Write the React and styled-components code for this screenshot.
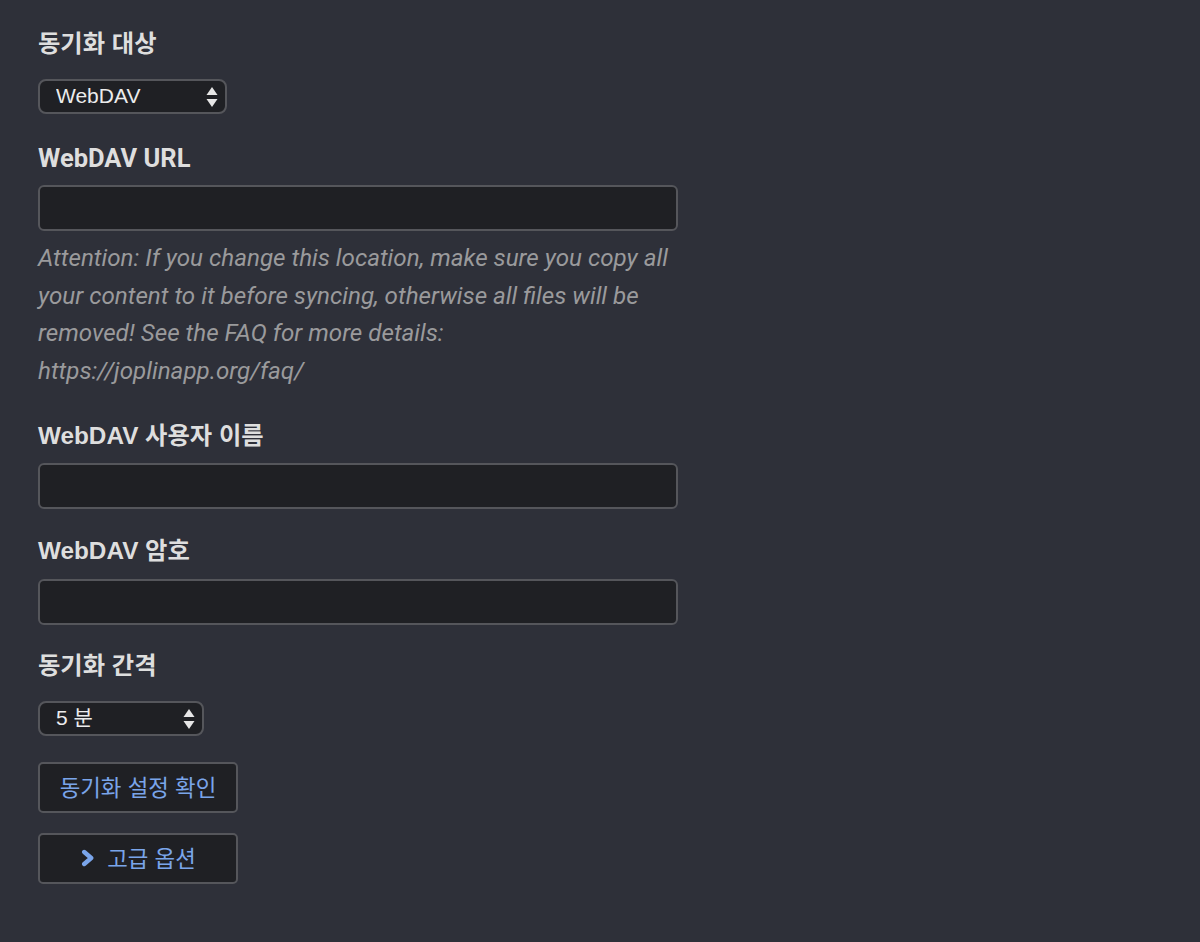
import React from "react";
import styled, { createGlobalStyle } from "styled-components";

const Global = createGlobalStyle`
  html, body { margin: 0; padding: 0; background: #2e3039; }
  body { font-family: Roboto, "Noto Sans CJK KR", sans-serif; }
  * { box-sizing: border-box; }
`;

const Page = styled.div`
  min-height: 942px;
  background: #2e3039;
  padding: 29px 38px 40px;
  display: flex;
  flex-direction: column;
  align-items: flex-start;
`;

const Label = styled.div`
  font-family: ${(p) => (p.$latin ? 'Roboto' : '"Liberation Sans"')}, "Noto Sans CJK KR", sans-serif;
  font-weight: 700;
  font-size: ${(p) => (p.$latin ? 25.5 : 24.3)}px;
  line-height: 30px;
  color: #dedede;
  margin-top: ${(p) => p.$mt || 0}px;
`;

const SelectWrap = styled.div`
  position: relative;
  width: ${(p) => p.$w}px;
  height: 35px;
  margin-top: ${(p) => p.$mt || 0}px;
`;

const Select = styled.select`
  appearance: none;
  -webkit-appearance: none;
  width: 100%;
  height: 100%;
  background: #1f2024;
  border: 2px solid #55565b;
  border-radius: 8px;
  color: #ececec;
  font-family: "Liberation Sans", "Noto Sans CJK KR", sans-serif;
  font-size: 21px;
  padding: 0 0 3px 16px;
  outline: none;
`;

const Arrows = styled.svg`
  position: absolute;
  right: 9px;
  top: 50%;
  transform: translateY(-50%);
  pointer-events: none;
`;

const Input = styled.input`
  width: 640px;
  height: 46px;
  background: #1f2024;
  border: 2px solid #55565b;
  border-radius: 6px;
  color: #ececec;
  font-size: 20px;
  padding: 0 12px;
  outline: none;
  margin-top: ${(p) => p.$mt || 0}px;
`;

const Description = styled.div`
  width: 640px;
  margin-top: 9px;
  font-family: Roboto, sans-serif;
  font-style: italic;
  font-size: 24.2px;
  line-height: 37.6px;
  color: #9a9a9c;
`;

const Button = styled.button`
  width: 200px;
  height: 51px;
  margin-top: ${(p) => p.$mt || 0}px;
  background: #1f2024;
  border: 2px solid #55565b;
  border-radius: 5px;
  color: #7aa5ea;
  font-family: "Liberation Sans", "Noto Sans CJK KR", sans-serif;
  font-size: 22.4px;
  display: flex;
  align-items: center;
  justify-content: center;
  gap: 12px;
  padding: 0 0 4px;
  cursor: pointer;
`;

const Chevron = styled.svg`
  flex: none;
  width: 15px;
  height: 18px;
  margin-top: 3px;
`;

const SelectBox = ({ w, mt, value, options }) => (
  <SelectWrap $w={w} $mt={mt}>
    <Select defaultValue={value}>
      {options.map((o) => (
        <option key={o}>{o}</option>
      ))}
    </Select>
    <Arrows width="12" height="22" viewBox="0 0 12 22">
      <path d="M6 1 L11.5 9 H0.5 Z" fill="#e6e6e6" />
      <path d="M6 21 L11.5 13 H0.5 Z" fill="#e6e6e6" />
    </Arrows>
  </SelectWrap>
);

export default function App() {
  return (
    <>
      <Global />
      <Page>
        <Label>동기화 대상</Label>
        <SelectBox w={189} mt={20} value="WebDAV" options={["WebDAV", "Dropbox", "OneDrive"]} />
        <Label $latin $mt={29}>WebDAV URL</Label>
        <Input $mt={12} />
        <Description>
          Attention: If you change this location, make sure you copy all your content to it before
          syncing, otherwise all files will be removed! See the FAQ for more details:
          https://joplinapp.org/faq/
        </Description>
        <Label $mt={31}>WebDAV 사용자 이름</Label>
        <Input $mt={12} />
        <Label $mt={27}>WebDAV 암호</Label>
        <Input $mt={13} type="password" />
        <Label $mt={26}>동기화 간격</Label>
        <SelectBox w={166} mt={20} value="5 분" options={["5 분", "10 분", "30 분"]} />
        <Button $mt={26}>동기화 설정 확인</Button>
        <Button $mt={20}>
          <Chevron viewBox="0 0 15 18">
            <path d="M4.2 3 L11.2 9 L4.2 15" fill="none" stroke="#7aa5ea" strokeWidth="4.4" strokeLinecap="round" strokeLinejoin="round" />
          </Chevron>
          고급 옵션
        </Button>
      </Page>
    </>
  );
}
